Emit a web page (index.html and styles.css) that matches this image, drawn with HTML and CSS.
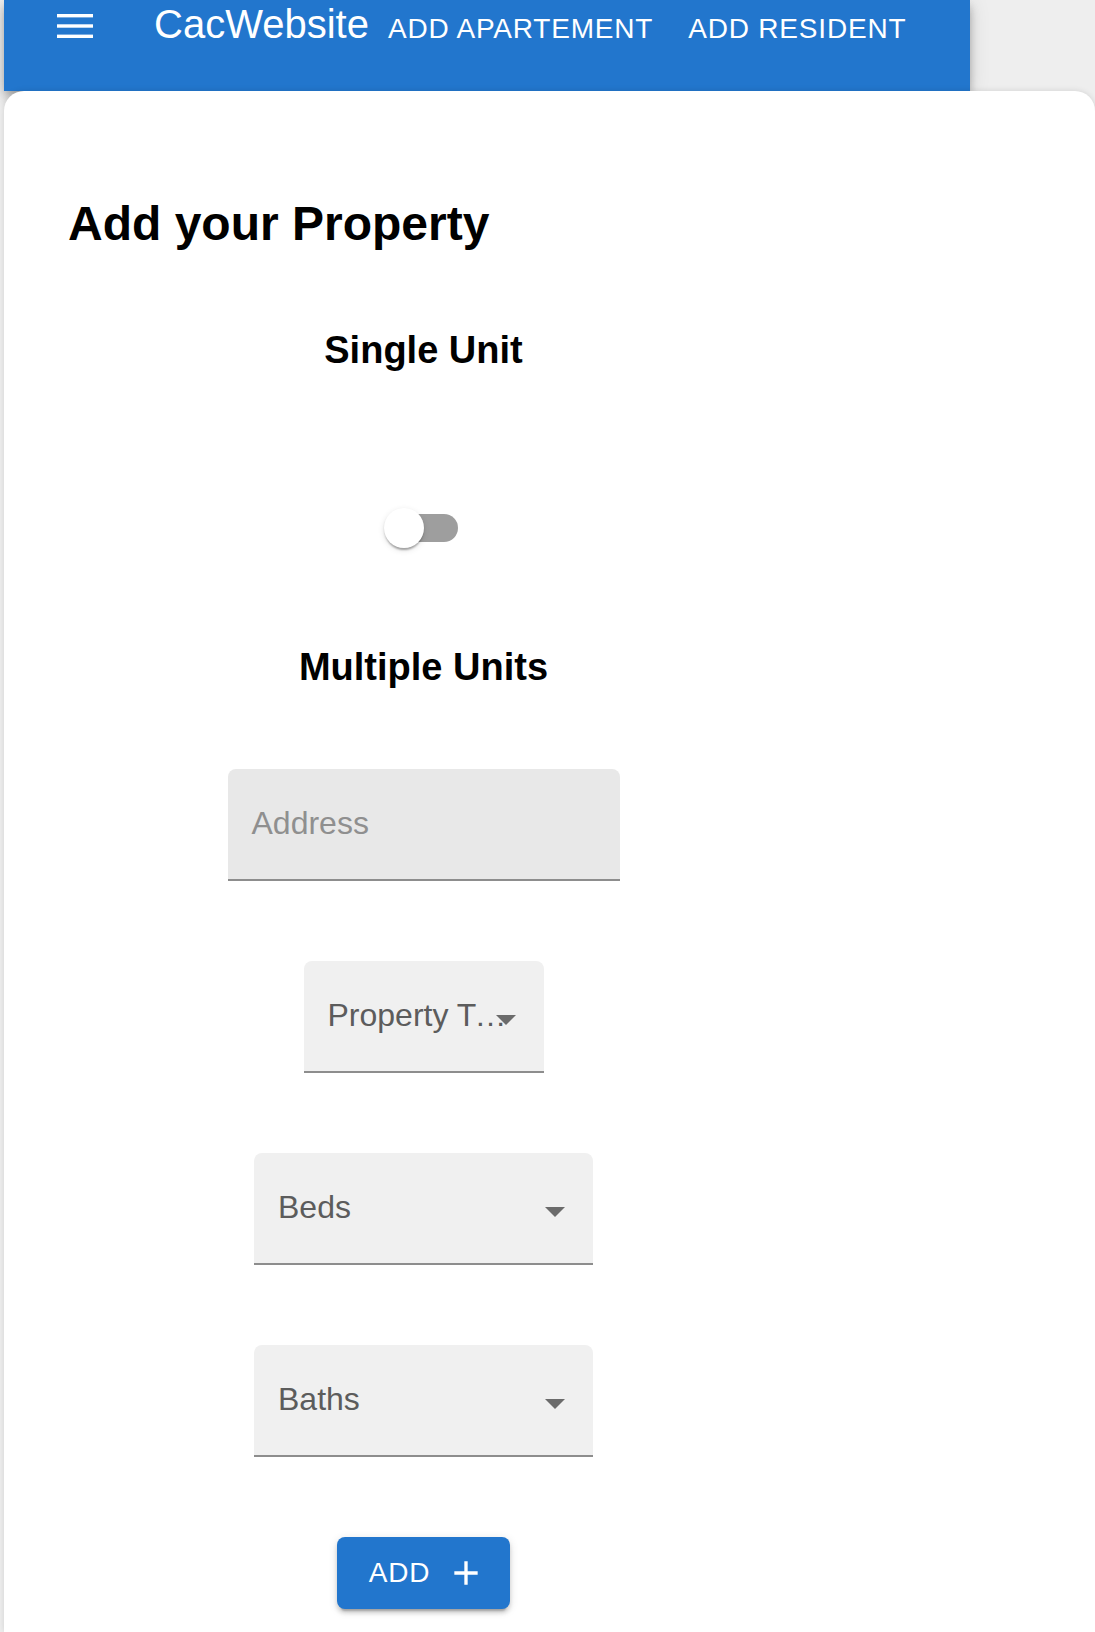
FILE: index.html
```html
<!DOCTYPE html>
<html lang="en">
<head>
<meta charset="utf-8">
<title>CacWebsite</title>
<link rel="stylesheet" href="styles.css">
</head>
<body>
<header class="appbar">
  <div class="toolbar">
    <button class="menu-btn" aria-label="menu">
      <svg class="menu-icon" width="36" height="24" viewBox="0 0 36 24"><rect x="0" y="0" width="36" height="3.4" fill="#fff"/><rect x="0" y="10.3" width="36" height="3.4" fill="#fff"/><rect x="0" y="20.6" width="36" height="3.4" fill="#fff"/></svg>
    </button>
    <span class="brand">CacWebsite</span>
    <a class="nav-btn">Add Apartement</a>
    <a class="nav-btn nav-btn-2">Add Resident</a>
  </div>
</header>
<main class="card">
  <h1 class="page-title">Add your Property</h1>
  <div class="form">
    <h2 class="label-single">Single Unit</h2>
    <div class="switch">
      <span class="switch-track"></span>
      <span class="switch-thumb"></span>
    </div>
    <h2 class="label-multiple">Multiple Units</h2>
    <div class="field field-address">
      <span class="placeholder">Address</span>
    </div>
    <div class="field select select-type">
      <span class="select-value">Property Type</span>
      <svg class="arrow" width="48" height="48" viewBox="0 0 24 24"><path d="M7 10l5 5 5-5z" fill="#6b6b6b"/></svg>
    </div>
    <div class="field select select-wide">
      <span class="select-value">Beds</span>
      <svg class="arrow" width="48" height="48" viewBox="0 0 24 24"><path d="M7 10l5 5 5-5z" fill="#6b6b6b"/></svg>
    </div>
    <div class="field select select-wide">
      <span class="select-value">Baths</span>
      <svg class="arrow" width="48" height="48" viewBox="0 0 24 24"><path d="M7 10l5 5 5-5z" fill="#6b6b6b"/></svg>
    </div>
    <button class="add-btn"><span>Add</span><svg class="plus" width="40" height="40" viewBox="0 0 24 24"><path d="M19 13h-6v6h-2v-6H5v-2h6V5h2v6h6v2z" fill="#fff"/></svg></button>
  </div>
</main>
</body>
</html>
```
FILE: styles.css
```css
* { box-sizing: border-box; }
html, body {
  margin: 0;
  padding: 0;
}
body {
  background: #eeeeee;
  font-family: "Liberation Sans", Arial, sans-serif;
  width: 1095px;
  height: 1632px;
  overflow: hidden;
}
.appbar {
  margin-left: 4px;
  width: 966px;
  height: 91px;
  background: #2276cd;
  box-shadow: 0 4px 8px -2px rgba(0,0,0,0.2), 0 8px 10px 0 rgba(0,0,0,0.14), 0 2px 20px 0 rgba(0,0,0,0.12);
}
.toolbar {
  display: flex;
  align-items: baseline;
  padding: 4px 0 0 53px;
}
.menu-btn {
  align-self: flex-start;
  margin: 10px 0 0 0;
  padding: 0;
  border: 0;
  background: none;
  width: 36px;
  height: 24px;
  display: block;
}
.menu-icon { display: block; }
.brand {
  margin-left: 61px;
  color: #fff;
  font-size: 40px;
  line-height: 40px;
}
.nav-btn {
  color: #fff;
  font-size: 28px;
  line-height: 28px;
  letter-spacing: 0.8px;
  text-transform: uppercase;
  padding: 0 16px;
  margin-left: 3px;
}
.nav-btn-2 { margin-left: 3px; }

.card {
  position: relative;
  margin-left: 4px;
  width: 1091px;
  min-height: 1541px;
  background: #fff;
  border-radius: 20px 20px 0 0;
  box-shadow: 0 0 6px rgba(0,0,0,0.12);
  padding: 104px 0 16px 64px;
}
.page-title {
  margin: 0;
  font-size: 48px;
  line-height: 57.6px;
  font-weight: 700;
  color: #000;
}
.form {
  width: 711px;
  display: flex;
  flex-direction: column;
  align-items: center;
}
.label-single, .label-multiple {
  margin: 0;
  font-size: 38px;
  line-height: 45.6px;
  font-weight: 700;
  color: #000;
}
.label-single { margin-top: 75px; }
.label-multiple { margin-top: 79px; }

.switch {
  position: relative;
  margin-top: 117px;
  width: 116px;
  height: 76px;
  padding: 24px;
}
.switch-track {
  display: block;
  width: 68px;
  height: 28px;
  border-radius: 14px;
  background: #9e9e9e;
}
.switch-thumb {
  position: absolute;
  left: 18px;
  top: 18px;
  width: 40px;
  height: 40px;
  border-radius: 50%;
  background: #fff;
  box-shadow: 0 4px 2px -2px rgba(0,0,0,0.2), 0 2px 2px 0 rgba(0,0,0,0.14), 0 2px 6px 0 rgba(0,0,0,0.12);
}

.field {
  position: relative;
  height: 112px;
  border-radius: 8px 8px 0 0;
  border-bottom: 2px solid #8d8d8d;
  padding: 35px 30px 0 24px;
  font-size: 32px;
  line-height: 38px;
  margin-top: 80px;
}
.field-address {
  margin-top: 78px;
  width: 392px;
  background: #e8e8e8;
}
.placeholder {
  color: #8f8f8f;
}
.select { background: #f0f0f0; }
.select-type { width: 240px; }
.select-wide { width: 339px; }
.select-value {
  display: block;
  color: #5c5c5c;
  white-space: nowrap;
  overflow: hidden;
  text-overflow: ellipsis;
}
.arrow {
  position: absolute;
  right: 14px;
  top: 34px;
}

.add-btn {
  margin-top: 80px;
  height: 72px;
  display: inline-flex;
  align-items: center;
  padding: 0 24px 0 32px;
  border: 0;
  border-radius: 8px;
  background: #2276cd;
  color: #fff;
  font-family: "Liberation Sans", Arial, sans-serif;
  font-size: 28px;
  line-height: 28px;
  letter-spacing: 0.8px;
  text-transform: uppercase;
  box-shadow: 0 6px 2px -4px rgba(0,0,0,0.2), 0 4px 4px 0 rgba(0,0,0,0.14), 0 2px 10px 0 rgba(0,0,0,0.12);
}
.plus {
  display: block;
  margin-left: 16px;
}
```
